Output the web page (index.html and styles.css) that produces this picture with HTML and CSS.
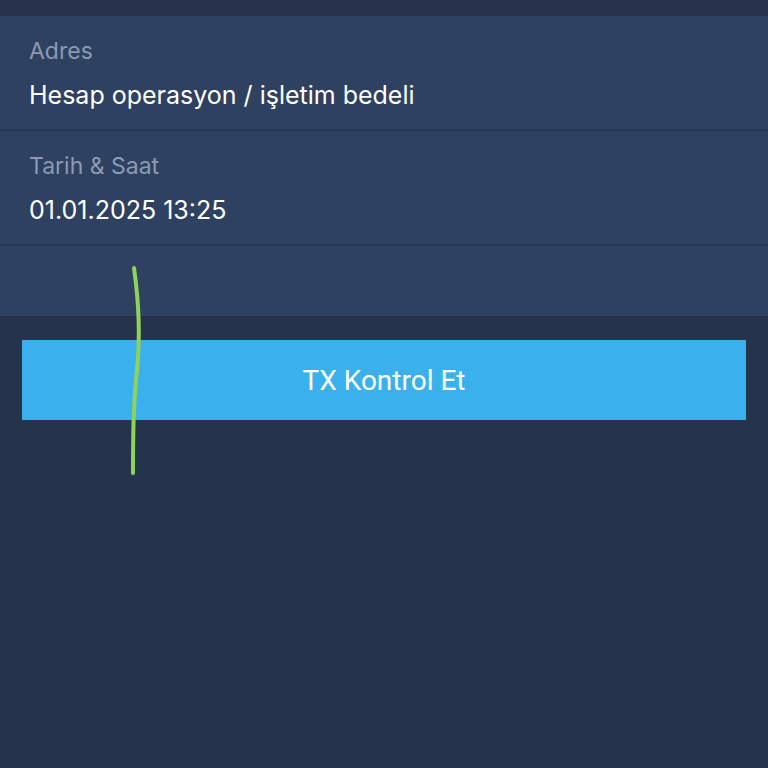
FILE: index.html
```html
<!DOCTYPE html>
<html>
<head>
<meta charset="utf-8">
<link rel="stylesheet" href="styles.css">
</head>
<body>
<div class="top"></div>
<div class="panel">
  <div class="row">
    <div class="label">Adres</div>
    <div class="value">Hesap operasyon / işletim bedeli</div>
  </div>
  <div class="row">
    <div class="label">Tarih &amp; Saat</div>
    <div class="value">01.01.2025 13:25</div>
  </div>
  <div class="row empty"></div>
</div>
<div class="actions">
  <div class="btn">TX Kontrol Et</div>
</div>
<svg class="stroke" width="768" height="768" viewBox="0 0 768 768">
  <path d="M134 268 C 140 310, 140 340, 137 370 C 134 400, 133 420, 133 473" fill="none" stroke="#8fd35a" stroke-width="4" stroke-linecap="round"/>
</svg>
</body>
</html>
```
FILE: styles.css
```css
html, body {
  margin: 0;
  padding: 0;
  background: #26334d;
  width: 768px;
  height: 768px;
  overflow: hidden;
  font-family: Inter, "Noto Sans", sans-serif;
  position: relative;
}
.top {
  height: 16px;
  background: #26324b;
}
.panel {
  background: #2f4161;
}
.row {
  height: 115px;
  box-sizing: border-box;
  padding: 22px 29px 0;
  border-bottom: 2px solid #283754;
}
.row.empty {
  height: 70px;
  border-bottom: none;
}
.label {
  color: #8c9ab3;
  font-size: 23px;
  line-height: 26px;
}
.value {
  color: #ffffff;
  font-size: 25px;
  line-height: 30px;
  margin-top: 16px;
}
.actions {
  padding: 24px 22px 0;
}
.btn {
  height: 80px;
  background: #3ab1ec;
  color: #ffffff;
  font-family: Roboto, sans-serif;
  font-size: 28px;
  display: flex;
  align-items: center;
  justify-content: center;
}
.stroke {
  position: absolute;
  left: 0;
  top: 0;
  pointer-events: none;
}
```
